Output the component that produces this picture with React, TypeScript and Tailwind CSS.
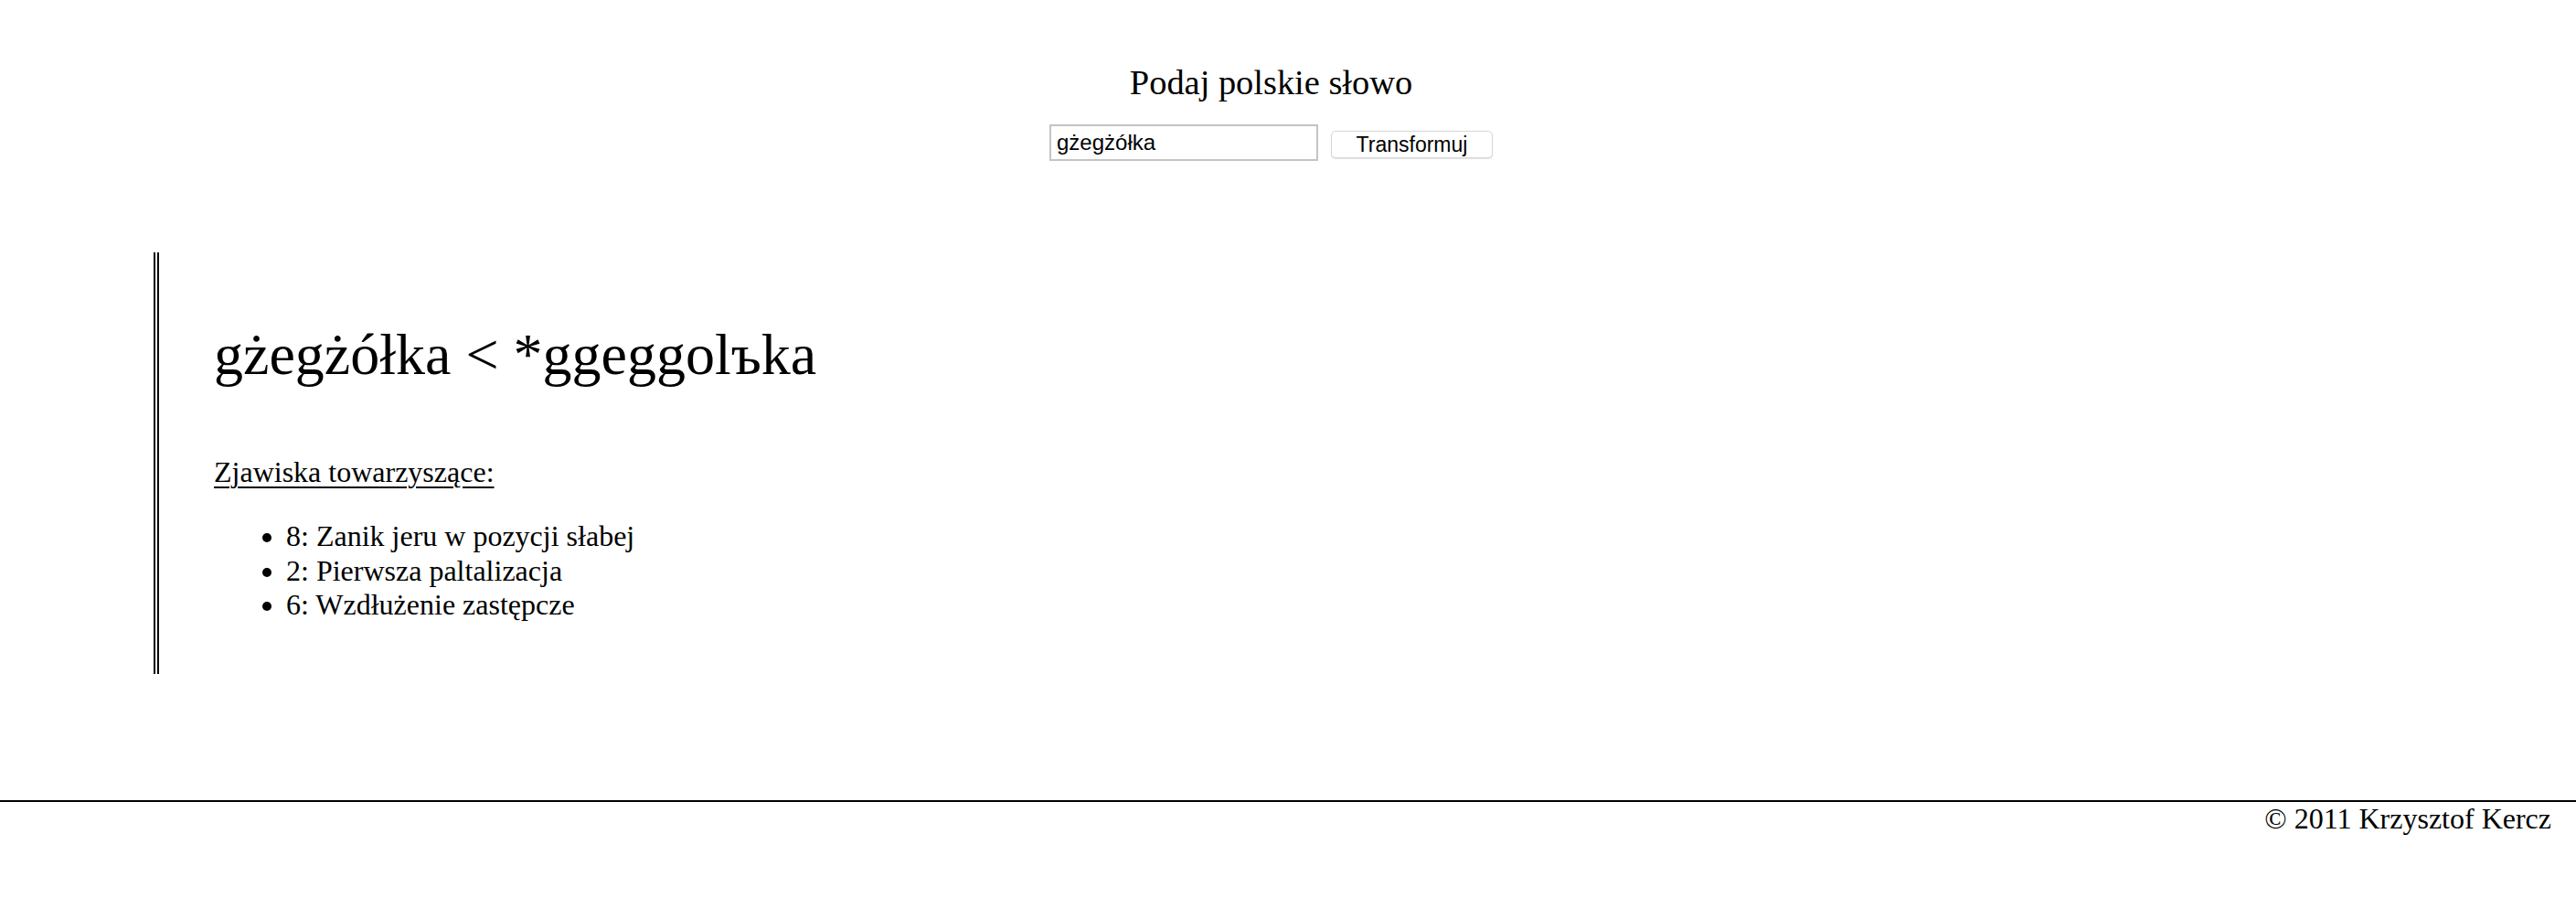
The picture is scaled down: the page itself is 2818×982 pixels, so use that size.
import React from "react";

export default function App() {
  const serif = { fontFamily: '"Liberation Serif", "Times New Roman", serif' };
  return (
    <div className="min-h-[982px] w-full bg-white text-black" style={serif}>
      <div className="flex flex-col items-center pr-[37px] pt-[68px]">
        <h3 className="text-[38.4px] leading-[44px] font-normal">Podaj polskie słowo</h3>
        <div className="mt-[24px] flex items-start gap-[14px]">
          <input
            type="text"
            defaultValue="gżegżółka"
            className="h-[40px] w-[294px] border-2 border-[#c4c4c4] bg-white px-[6px] text-[24px] text-black outline-none"
            style={{ fontFamily: '"Liberation Sans", Arial, sans-serif' }}
          />
          <button
            className="mt-[7px] h-[30px] w-[177px] rounded-[5px] border border-[#d6d6d6] bg-white text-[23px] leading-[28px] text-black shadow-[0_1px_1px_rgba(0,0,0,0.12)]"
            style={{ fontFamily: '"Liberation Sans", Arial, sans-serif' }}
          >
            Transformuj
          </button>
        </div>
      </div>

      <div className="ml-[168px] mt-[100px] border-l-[6px] border-double border-black pb-[32px] pl-[60px] pt-[32px]">
        <h1 className="mt-[43px] text-[64px] leading-[74px] font-normal">gżegżółka &lt; *ggeggolъka</h1>
        <p className="mt-[73px] text-[32px] leading-[37px] underline underline-offset-[5px] decoration-[2px]">
          Zjawiska towarzyszące:
        </p>
        <ul className="mb-[24px] mt-[33px] list-disc pl-[79px] text-[32px] leading-[37.5px]">
          <li>8: Zanik jeru w pozycji słabej</li>
          <li>2: Pierwsza paltalizacja</li>
          <li>6: Wzdłużenie zastępcze</li>
        </ul>
      </div>

      <footer className="mt-[138px] border-t-2 border-black">
        <p className="pr-[27px] text-right text-[32px] leading-[37px]">© 2011 Krzysztof Kercz</p>
      </footer>
    </div>
  );
}
